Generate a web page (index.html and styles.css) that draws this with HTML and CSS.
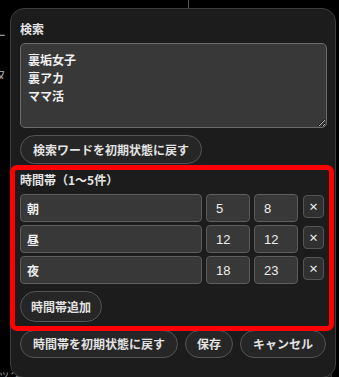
FILE: index.html
```html
<!DOCTYPE html>
<html lang="ja">
<head>
<meta charset="utf-8">
<link rel="stylesheet" href="styles.css">
</head>
<body>
<div class="page">
  <div class="page-side">
    <span class="frag f1">ー</span>
    <span class="frag f2">タ</span>
  </div>
  <div class="page-rule"></div>
  <div class="page-foot">
    <span class="foot-a">ッター</span>
    <span class="foot-sep"></span>
    <span class="foot-b">cookieのポリシー</span>
  </div>
  <div class="page-box"></div>
</div>

<div class="panel">
  <div class="label">検索</div>
  <textarea class="words">裏垢女子
裏アカ
ママ活</textarea>
  <div class="row-btn">
    <button class="pill">検索ワードを初期状態に戻す</button>
  </div>

  <section class="times">
    <div class="label">時間帯（1〜5件）</div>
    <div class="trow">
      <input class="name" value="朝">
      <input class="num" value="5">
      <input class="num" value="8">
      <button class="del">×</button>
    </div>
    <div class="trow">
      <input class="name" value="昼">
      <input class="num" value="12">
      <input class="num" value="12">
      <button class="del">×</button>
    </div>
    <div class="trow">
      <input class="name" value="夜">
      <input class="num" value="18">
      <input class="num" value="23">
      <button class="del">×</button>
    </div>
    <div class="row-btn">
      <button class="pill add">時間帯追加</button>
    </div>
  </section>

  <div class="actions">
    <button class="pill reset">時間帯を初期状態に戻す</button>
    <button class="pill save">保存</button>
    <button class="pill cancel">キャンセル</button>
  </div>
</div>
</body>
</html>
```

FILE: styles.css
```css
html, body {
  margin: 0;
  padding: 0;
  background: #000;
  width: 339px;
  height: 377px;
  overflow: hidden;
  font-family: "Noto Sans CJK JP", "Noto Sans", sans-serif;
}

.page {
  position: relative;
  width: 339px;
  height: 377px;
}

.page-side {
  display: flex;
  flex-direction: column;
  padding-top: 26px;
  margin-left: -7px;
  gap: 22px;
  color: #9a9a9a;
  font-size: 13px;
  line-height: 18px;
}

.page-rule {
  position: absolute;
  left: 188px;
  top: 0;
  width: 1px;
  height: 8px;
  background: #555;
}

.page-foot {
  position: absolute;
  left: 0;
  top: 366px;
  display: flex;
  align-items: flex-start;
  color: #8a8a8a;
  font-size: 12px;
  line-height: 16px;
}

.foot-a {
  margin-left: -2px;
}

.foot-sep {
  width: 1px;
  height: 14px;
  background: #777;
  margin: 4px 14px 0 12px;
}

.page-box {
  position: absolute;
  left: 286px;
  top: 362px;
  width: 44px;
  height: 30px;
  border-radius: 6px;
  background: #1e1e1e;
  border: 1px solid #333;
}

.panel {
  position: absolute;
  left: 10px;
  top: 8px;
  width: 306px;
  height: 347px;
  padding: 12px 9px 9px 9px;
  background: #1c1c1c;
  border: 1px solid #3e3e3e;
  border-radius: 14px;
  color: #e2e2e2;
  box-sizing: content-box;
}

.label {
  font-size: 12px;
  font-weight: 700;
  line-height: 16px;
  color: #e4e4e4;
}

.words {
  display: block;
  margin-top: 6px;
  width: 307px;
  height: 85px;
  box-sizing: border-box;
  padding: 7px 7px;
  background: #383838;
  border: 1px solid #6a6a6a;
  border-radius: 5px;
  color: #eeeeee;
  font-family: inherit;
  font-size: 12px;
  font-weight: 700;
  line-height: 18px;
  resize: vertical;
  outline: none;
}

.row-btn {
  display: flex;
  margin-top: 7px;
}

.pill {
  flex: none;
  white-space: nowrap;
  height: 29px;
  padding: 0 12px;
  background: #262626;
  border: 1px solid #555;
  border-radius: 15px;
  color: #e2e2e2;
  font-family: inherit;
  font-size: 12px;
  font-weight: 700;
  line-height: 16px;
  box-sizing: border-box;
}

.times {
  margin: 6px 0 0 -5px;
  width: 314px;
  padding: 2px 5px 4px 5px;
  box-sizing: border-box;
  outline: 5px solid #ff0000;
  border-radius: 2px;
}

.trow {
  display: flex;
  align-items: flex-start;
  margin-top: 3px;
}

.times .label + .trow {
  margin-top: 6px;
}

.trow input {
  height: 28px;
  box-sizing: border-box;
  background: #383838;
  border: 1px solid #5c5c5c;
  border-radius: 4px;
  color: #eeeeee;
  font-family: inherit;
  font-size: 12px;
  font-weight: 700;
  outline: none;
}

.name {
  width: 182px;
  padding: 0 6px;
}

.trow .num {
  width: 44px;
  margin-left: 4px;
  padding: 0 9px;
  font-family: "Liberation Sans", Arial, sans-serif;
  font-size: 13px;
  font-weight: 400;
}

.trow .num + .num {
  margin-left: 4px;
}

.del {
  width: 23px;
  height: 23px;
  margin: 1px 0 0 5px;
  padding: 0;
  background: #303030;
  border: 1px solid #555;
  border-radius: 4px;
  color: #f0f0f0;
  font-family: "Noto Sans CJK JP", sans-serif;
  font-size: 10px;
  font-weight: 700;
  line-height: 21px;
}

.add {
  height: 31px;
  padding: 0 10px;
  border-radius: 16px;
}

.actions {
  display: flex;
  gap: 7px;
  margin-top: 4px;
}

.actions .pill {
  height: 28px;
  border-radius: 14px;
}

.actions .reset {
  padding: 0 12px;
}

.actions .save {
  padding: 0 11px;
}

.actions .cancel {
  padding: 0 12px;
}
```
